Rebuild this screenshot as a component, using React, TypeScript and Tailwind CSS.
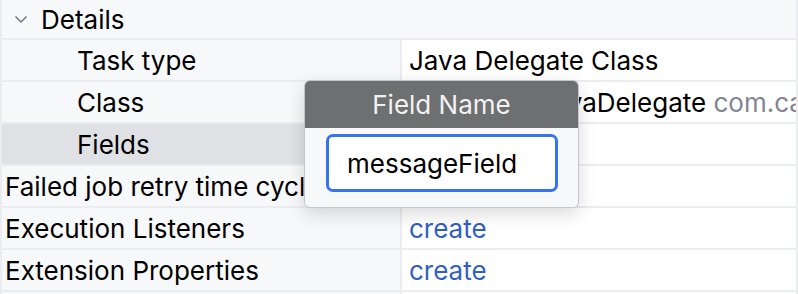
import React from "react";

type Row = {
  label: string;
  indent?: boolean;
  value?: React.ReactNode;
  selected?: boolean;
};

const rows: Row[] = [
  { label: "Task type", indent: true, value: "Java Delegate Class" },
  {
    label: "Class",
    indent: true,
    value: (
      <span>
        PrintFieldsJavaDelegate{" "}
        <span className="text-[#818594]">com.camunda.example</span>
      </span>
    ),
  },
  { label: "Fields", indent: true, selected: true },
  { label: "Failed job retry time cycle" },
  {
    label: "Execution Listeners",
    value: <span className="text-[#315fc2]">create</span>,
  },
  {
    label: "Extension Properties",
    value: <span className="text-[#315fc2]">create</span>,
  },
];

export default function App() {
  return (
    <div
      className="relative w-[798px] h-[294px] overflow-hidden bg-[#ebecf0] px-[2px] flex flex-col gap-[2px] text-[26px] text-black"
      style={{ fontFamily: "Inter, 'Noto Sans', sans-serif" }}
    >
      <div className="h-[38px] shrink-0 bg-[#f7f8fa] flex items-center">
        <svg
          width="14"
          height="14"
          viewBox="0 0 14 14"
          className="ml-[12px] mr-[13px]"
          fill="none"
          stroke="#6c707e"
          strokeWidth="1.4"
        >
          <path d="M1.5 4.5l5.5 5.5 5.5-5.5" />
        </svg>
        <span>Details</span>
      </div>

      {rows.map((r) => (
        <div key={r.label} className="h-[40px] shrink-0 grid grid-cols-[398px_1fr] gap-[2px]">
          <div
            className={`flex items-center overflow-hidden whitespace-nowrap ${
              r.selected ? "bg-[#dfe1e5]" : "bg-[#f7f8fa]"
            } ${r.indent ? "pl-[75px]" : "pl-[3px]"}`}
          >
            {r.label}
          </div>
          <div className="bg-white flex items-center pl-[7px] overflow-hidden whitespace-nowrap">
            {r.value}
          </div>
        </div>
      ))}

      <div className="h-[40px] shrink-0 grid grid-cols-[398px_1fr] gap-[2px]">
        <div className="bg-[#f7f8fa]" />
        <div className="bg-white" />
      </div>

      <div className="absolute left-[304px] top-[80px] w-[275px] h-[128px] rounded-[6px] border border-[#c4c6cb] bg-[#f7f8fa] shadow-[0_6px_18px_rgba(0,0,0,0.15)] overflow-hidden flex flex-col">
        <div className="h-[47px] bg-[#6e6f71] text-[#f2f2f2] flex items-center justify-center">
          Field Name
        </div>
        <div className="flex-1 flex items-start pl-[21px] pt-[6px]">
          <div className="w-[232px] h-[58px] rounded-[7px] border-[3px] border-[#3574f0] bg-white flex items-center pl-[18px]">
            messageField
          </div>
        </div>
      </div>
    </div>
  );
}
